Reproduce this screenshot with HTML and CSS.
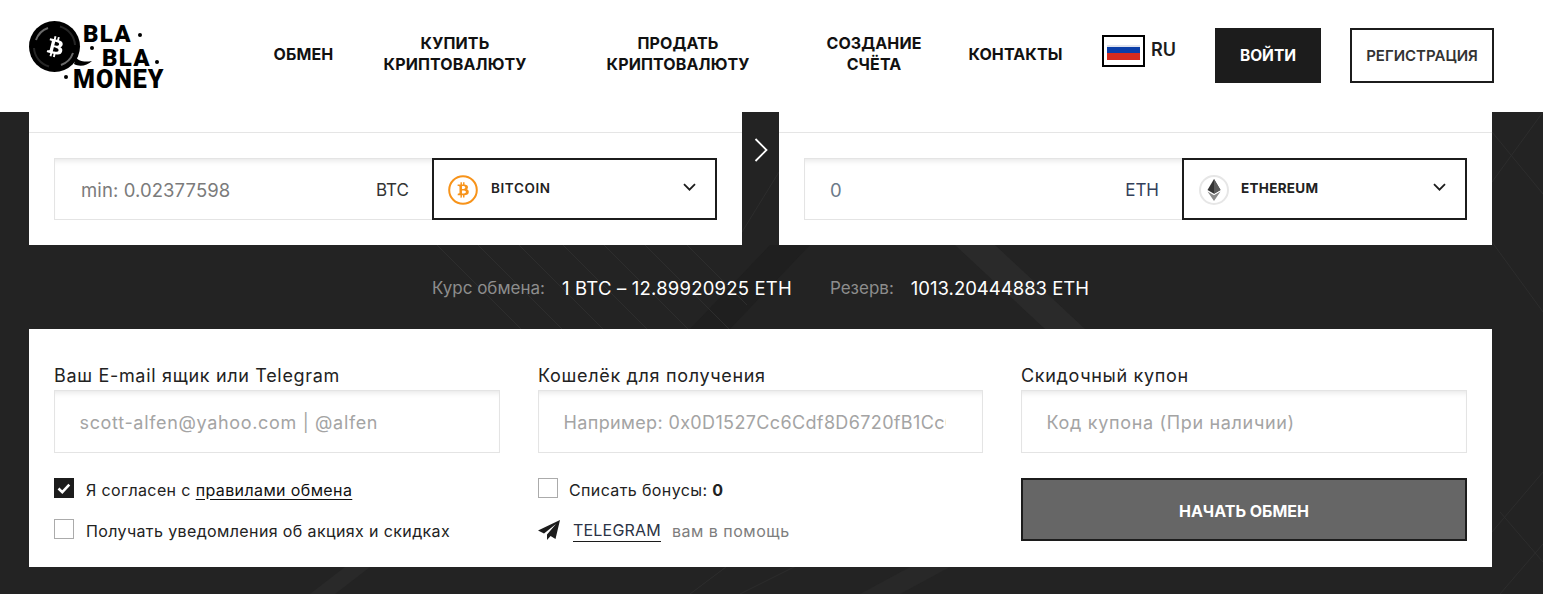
FILE: index.html
```html
<!DOCTYPE html>
<html lang="ru">
<head>
<meta charset="utf-8">
<title>Bla Bla Money</title>
<link rel="stylesheet" href="styles.css">
</head>
<body>
<header class="header">
  <a class="logo">
    <svg class="logo-bubble" viewBox="0 0 64 52" width="64" height="52">
      <circle cx="25.500" cy="25.500" r="25.500" fill="#000"/>
      <path d="M47 36c3 5 9 5 16 4-5 5-13 6-18 3z" fill="#000"/>
      <path d="M7 19A19.500 19.500 0 0 1 19 7M44 32a19.500 19.500 0 0 1-12 12" fill="none" stroke="#6a6a6a" stroke-width="2"/>
      <path d="M5 27A20.500 20.500 0 0 0 20 45.500M46 24A20.500 20.500 0 0 0 31 5.500" fill="none" stroke="#262626" stroke-width="2"/>
      <g transform="translate(9.500 9.200) scale(1.400)">
        <path fill="#fff" d="M17.288 10.291c.24-1.59-.974-2.45-2.64-3.03l.54-2.153-1.315-.33-.525 2.107c-.345-.087-.705-.167-1.064-.25l.526-2.127-1.32-.33-.54 2.165c-.285-.067-.565-.132-.84-.2l-1.815-.45-.35 1.407s.975.225.955.236c.535.136.63.486.615.766l-1.477 5.92c-.075.166-.24.406-.614.314.015.02-.96-.24-.96-.24l-.66 1.51 1.71.426.93.242-.54 2.19 1.32.327.54-2.17c.36.1.705.19 1.05.273l-.51 2.154 1.32.33.545-2.19c2.24.427 3.93.257 4.64-1.774.57-1.637-.03-2.58-1.217-3.196.854-.193 1.5-.76 1.68-1.93h.01zm-3.01 4.22c-.404 1.64-3.157.75-4.05.53l.72-2.9c.896.23 3.757.67 3.33 2.37zm.41-4.24c-.37 1.49-2.662.735-3.405.55l.654-2.64c.744.18 3.137.524 2.75 2.084v.006z"/>
      </g>
    </svg>
    <span class="logo-line logo-l1">BLA</span>
    <span class="logo-line logo-l2">BLA</span>
    <span class="logo-line logo-l3">MONEY</span>
    <i class="dot dot-1"></i><i class="dot dot-2"></i><i class="dot dot-3"></i><i class="dot dot-4"></i>
  </a>
  <nav class="nav">
    <a class="nav-link n1">ОБМЕН</a>
    <a class="nav-link n2">КУПИТЬ<br>КРИПТОВАЛЮТУ</a>
    <a class="nav-link n3">ПРОДАТЬ<br>КРИПТОВАЛЮТУ</a>
    <a class="nav-link n4">СОЗДАНИЕ<br>СЧЁТА</a>
    <a class="nav-link n5">КОНТАКТЫ</a>
  </nav>
  <div class="lang">
    <span class="flag"><i class="flag-white"></i><i class="flag-blue"></i><i class="flag-red"></i></span>
    <span class="lang-code">RU</span>
  </div>
  <a class="btn-login">ВОЙТИ</a>
  <a class="btn-register">РЕГИСТРАЦИЯ</a>
</header>

<main class="main">
  <svg class="bg-art" viewBox="0 0 1543 482" preserveAspectRatio="none" aria-hidden="true">
    <path d="M690 217l80-84 40 0-80 84z" fill="#1f1f1f"/>
    <path d="M955 133l40 0 90 84-40 0z" fill="#2a2a2a"/>
    <path d="M310 482l35-27 25 0-35 27z" fill="#292929"/>
    <path d="M860 482l50-27 40 0-50 27z" fill="#282828"/>
    <g fill="none" stroke="#2d2d2d" stroke-width="1">
      <path d="M437 133l84 84M478 133l84 84M519 133l84 84M563 133l84 84M604 133l84 84M645 133l84 84M687 133l60 60"/>
      <path d="M742 120l37-60M1492 70l51-70M1492 130l51 70M1492 20l51 62M1492 420l51-60M1500 482l43-50M1500 400l43 50"/>
      <path d="M690 482l40-30M740 482l60-30"/>
    </g>
  </svg>

  <section class="exchange">
    <div class="pane">
      <div class="pane-top"></div>
      <div class="pane-body">
        <div class="amount">
          <input class="amount-input" type="text" placeholder="min: 0.02377598">
          <span class="amount-code">BTC</span>
        </div>
        <div class="select">
          <svg class="coin" viewBox="0 0 30 30" width="30" height="30">
            <circle cx="15" cy="15" r="13.800" fill="none" stroke="#f7931a" stroke-width="2"/>
            <g transform="translate(2.400 2.400) scale(1.050)">
              <path fill="#f7931a" transform="rotate(-14 12 12)" d="M17.288 10.291c.24-1.59-.974-2.45-2.64-3.03l.54-2.153-1.315-.33-.525 2.107c-.345-.087-.705-.167-1.064-.25l.526-2.127-1.32-.33-.54 2.165c-.285-.067-.565-.132-.84-.2l-1.815-.45-.35 1.407s.975.225.955.236c.535.136.63.486.615.766l-1.477 5.92c-.075.166-.24.406-.614.314.015.02-.96-.24-.96-.24l-.66 1.51 1.71.426.93.242-.54 2.19 1.32.327.54-2.17c.36.1.705.19 1.05.273l-.51 2.154 1.32.33.545-2.19c2.24.427 3.93.257 4.64-1.774.57-1.637-.03-2.58-1.217-3.196.854-.193 1.5-.76 1.68-1.93h.01zm-3.01 4.22c-.404 1.64-3.157.75-4.05.53l.72-2.9c.896.23 3.757.67 3.33 2.37zm.41-4.24c-.37 1.49-2.662.735-3.405.55l.654-2.64c.744.18 3.137.524 2.75 2.084v.006z"/>
            </g>
          </svg>
          <span class="select-name">BITCOIN</span>
          <svg class="caret" viewBox="0 0 13 8" width="13" height="8"><path d="M1 1.200l5.500 5.500L12 1.200" fill="none" stroke="#1c1c1c" stroke-width="1.800"/></svg>
        </div>
      </div>
    </div>
    <div class="divider">
      <svg viewBox="0 0 14 24" width="14" height="24"><path d="M1.500 1l11 11-11 11" fill="none" stroke="#fff" stroke-width="1.800"/></svg>
    </div>
    <div class="pane">
      <div class="pane-top"></div>
      <div class="pane-body">
        <div class="amount amount-eth">
          <input class="amount-input input-zero" type="text" placeholder="0">
          <span class="amount-code code-eth">ETH</span>
        </div>
        <div class="select select-eth">
          <svg class="coin" viewBox="0 0 30 30" width="30" height="30">
            <circle cx="15" cy="15" r="14" fill="#fff" stroke="#e6e6e6" stroke-width="2"/>
            <path d="M15 4l-6.500 11L15 18.800 21.500 15z" fill="#343434"/>
            <path d="M15 4v14.800l6.500-3.800z" fill="#5c5c5c"/>
            <path d="M8.500 16.400L15 26l6.500-9.600L15 20.200z" fill="#8a8a8a"/>
          </svg>
          <span class="select-name">ETHEREUM</span>
          <svg class="caret" viewBox="0 0 13 8" width="13" height="8"><path d="M1 1.200l5.500 5.500L12 1.200" fill="none" stroke="#1c1c1c" stroke-width="1.800"/></svg>
        </div>
      </div>
    </div>
  </section>

  <section class="rate">
    <span class="rate-label">Курс обмена:</span>
    <span class="rate-value rate-value-1">1 BTC – 12.89920925 ETH</span>
    <span class="rate-label rate-label-2">Резерв:</span>
    <span class="rate-value">1013.20444883 ETH</span>
  </section>

  <section class="form">
    <div class="col">
      <label class="field-label">Ваш E-mail ящик или Telegram</label>
      <input class="field" type="text" placeholder="scott-alfen@yahoo.com | @alfen">
      <div class="checks">
        <div class="check-row">
          <span class="box box-on"><svg viewBox="0 0 14 11" width="14" height="11"><path d="M1.500 5.500l3.800 3.600 7-7.400" fill="none" stroke="#fff" stroke-width="2.600"/></svg></span>
          <span class="check-text">Я согласен с <a class="rules">правилами обмена</a></span>
        </div>
        <div class="check-row">
          <span class="box"></span>
          <span class="check-text">Получать уведомления об акциях и скидках</span>
        </div>
      </div>
    </div>
    <div class="col">
      <label class="field-label">Кошелёк для получения</label>
      <input class="field field-wallet" type="text" placeholder="Например: 0x0D1527Cc6Cdf8D6720fB1Cc6Cdf8D6720">
      <div class="checks">
        <div class="check-row">
          <span class="box"></span>
          <span class="check-text check-tight">Списать бонусы: <b class="bonus">0</b></span>
        </div>
        <div class="check-row help-row">
          <svg class="plane" viewBox="0 0 22 20" width="22" height="20"><path d="M22 0L0 10.500l6 3L18 4 9 14.500V20l3.600-4 4.900 3z" fill="#1c1c1c"/></svg>
          <a class="tg">TELEGRAM</a>
          <span class="help-text">вам в помощь</span>
        </div>
      </div>
    </div>
    <div class="col">
      <label class="field-label">Скидочный купон</label>
      <input class="field" type="text" placeholder="Код купона (При наличии)">
      <button class="submit" type="button">НАЧАТЬ ОБМЕН</button>
    </div>
  </section>
</main>
</body>
</html>
```
FILE: styles.css
```css
* { box-sizing: border-box; }
html, body { margin: 0; padding: 0; }
body {
  width: 1543px;
  height: 594px;
  overflow: hidden;
  background: #232323;
  font-family: Inter, "Noto Sans", sans-serif;
  color: #1c1c1c;
}
a { color: inherit; text-decoration: none; }

/* header */
.header {
  height: 112px;
  background: #fff;
  display: flex;
  align-items: flex-start;
  padding: 0 0 0 29px;
}
.logo {
  position: relative;
  display: block;
  width: 136px;
  height: 72px;
  margin-top: 20px;
  flex: none;
  font-family: Roboto, "Liberation Sans", sans-serif;
  font-weight: 900;
  font-size: 24px;
  line-height: 18px;
  color: #000;
}
.logo-bubble { position: absolute; left: 0; top: 1px; }
.logo-line { position: absolute; white-space: nowrap; }
.logo-l1 { left: 54px; top: 5px; letter-spacing: 1.300px; }
.logo-l2 { left: 73px; top: 29px; letter-spacing: 1.300px; }
.logo-l3 { left: 44px; top: 51px; font-size: 25px; letter-spacing: 1px; }
.dot { position: absolute; width: 4px; height: 4px; border-radius: 50%; background: #000; }
.dot-1 { left: 109px; top: 13px; }
.dot-2 { left: 61px; top: 26px; }
.dot-3 { left: 126px; top: 40px; }
.dot-4 { left: 35px; top: 55px; }

.nav { display: flex; align-items: center; height: 108px; margin-left: 108px; flex: none; }
.nav-link {
  display: block;
  text-align: center;
  font-weight: 700;
  font-size: 16px;
  line-height: 21px;
  letter-spacing: .12px;
  color: #111;
  white-space: nowrap;
}
.n1 { width: 61px; }
.n2 { width: 144px; margin-left: 49px; }
.n3 { width: 144px; margin-left: 79px; }
.n4 { width: 96px; margin-left: 76px; }
.n5 { width: 95px; margin-left: 46px; }

.lang { display: flex; align-items: flex-start; margin: 35px 0 0 39px; flex: none; width: 75px; }
.flag {
  width: 43px;
  height: 32px;
  border: 2.500px solid #000;
  padding: 8px 3px 5px;
  display: flex;
  flex-direction: column;
  flex: none;
}
.flag i { display: block; }
.flag-white { height: 2px; background: #dfe3ee; }
.flag-blue { height: 7px; background: #0a3ea8; }
.flag-red { height: 8px; background: #d52b1e; }
.lang-code { margin-left: 6px; font-weight: 600; font-size: 18px; line-height: 30px; }

.btn-login {
  width: 106px;
  height: 55px;
  margin: 28px 0 0 38px;
  background: #1c1c1c;
  color: #fff;
  font-weight: 700;
  font-size: 15.500px;
  display: flex;
  align-items: center;
  justify-content: center;
  flex: none;
}
.btn-register {
  width: 144px;
  height: 55px;
  margin: 28px 0 0 29px;
  border: 2px solid #1c1c1c;
  font-weight: 600;
  font-size: 15px;
  display: flex;
  align-items: center;
  justify-content: center;
  flex: none;
  color: #333;
}

/* main */
.main {
  position: relative;
  height: 482px;
  padding: 0 51px 0 29px;
  overflow: hidden;
}
.bg-art { position: absolute; left: 0; top: 0; width: 1543px; height: 482px; }

.exchange { position: relative; display: flex; height: 133px; }
.pane { width: 713px; background: #fff; flex: none; }
.pane-top { height: 21px; border-bottom: 1px solid #e5e5e5; }
.pane-body { display: flex; padding: 25px 25px 0; }
.divider {
  width: 37px;
  flex: none;
  display: flex;
  justify-content: center;
  padding-top: 26px;
}

.amount {
  width: 378px;
  height: 62px;
  border: 1px solid #e4e4e4;
  border-right: 0;
  box-shadow: inset 0 6px 6px -5px rgba(0,0,0,.12);
  display: flex;
  align-items: center;
  padding: 2px 23px 0 26px;
  flex: none;
}
.amount-input {
  flex: 1;
  min-width: 0;
  border: 0;
  outline: 0;
  background: transparent;
  padding: 0;
  font: 400 18.500px Inter, sans-serif;
  letter-spacing: .1px;
  color: #555;
}
.amount-input::placeholder { color: #7b7b7b; opacity: 1; }
.input-zero { margin-left: -1px; }
.input-zero::placeholder { color: #6c7a89; }
.amount-code { font-size: 17px; color: #333; }
.code-eth { color: #33405a; }
.select {
  width: 285px;
  height: 62px;
  border: 2px solid #1c1c1c;
  display: flex;
  align-items: center;
  padding: 0 19px 0 14px;
  background: #fff;
  flex: none;
}
.select-eth { padding-left: 15px; }
.select-eth .select-name { margin-left: 12px; font-weight: 700; letter-spacing: .3px; }
.coin { flex: none; margin-top: 2px; }
.select-name { margin-left: 13px; font-weight: 600; font-size: 13.500px; letter-spacing: .6px; flex: 1; margin-top: -2px; color: #222; }
.caret { flex: none; margin-top: -4px; }

.rate {
  position: relative;
  height: 84px;
  padding-top: 2px;
  display: flex;
  align-items: center;
  justify-content: center;
  font-size: 18.500px;
}
.rate-label { color: #8d8d8d; font-size: 17px; }
.rate-value { color: #fff; margin-left: 17px; font-weight: 400; }
.rate-value-1 { letter-spacing: .2px; }
.rate-label-2 { margin-left: 38px; }

.form {
  position: relative;
  width: 1463px;
  height: 238px;
  background: #fff;
  display: grid;
  grid-template-columns: 446px 445px 446px;
  column-gap: 38px;
  padding: 35px 25px 0;
}
.col { display: flex; flex-direction: column; }
.field-label { font-size: 18px; line-height: 23px; letter-spacing: .68px; margin-bottom: 3px; color: #222; height: 23px; white-space: nowrap; }
.field {
  height: 63px;
  border: 1px solid #e4e4e4;
  box-shadow: inset 0 6px 6px -5px rgba(0,0,0,.12);
  outline: 0;
  padding: 2px 36px 0 24.500px;
  font: 400 18px Inter, sans-serif;
  letter-spacing: .67px;
  background: #fff;
}
.field-wallet { letter-spacing: .36px; }
.field::placeholder { color: #a4a4a4; opacity: 1; }
.checks { display: flex; flex-direction: column; gap: 21px; margin-top: 25px; }
.check-row { display: flex; align-items: center; height: 20px; }
.box {
  width: 20px;
  height: 20px;
  border: 1px solid #ababab;
  flex: none;
  display: flex;
  align-items: center;
  justify-content: center;
}
.box-on { background: #1c1c1c; border-color: #1c1c1c; }
.check-text { margin: 3px 0 0 12px; font-size: 16px; letter-spacing: .38px; white-space: nowrap; color: #222; }
.check-tight { margin-left: 11px; }
.rules { color: #111; text-decoration: underline; text-underline-offset: 3px; }
.bonus { font-weight: 700; }
.help-row { height: 21px; }
.plane { flex: none; }
.tg { margin: 3px 0 0 13px; padding-top: 1px; padding-bottom: 1px; border-bottom: 1px solid #1c1c1c; font-size: 16px; letter-spacing: .2px; line-height: 19px; color: #2b3345; }
.help-text { margin: 3px 0 0 11px; font-size: 16px; letter-spacing: .5px; color: #7d7d7d; }
.submit {
  width: 446px;
  height: 63px;
  margin-top: 25px;
  padding-top: 3px;
  background: #666;
  border: 2px solid #1c1c1c;
  color: #fff;
  font: 700 16px Inter, sans-serif;
  cursor: pointer;
}
```
